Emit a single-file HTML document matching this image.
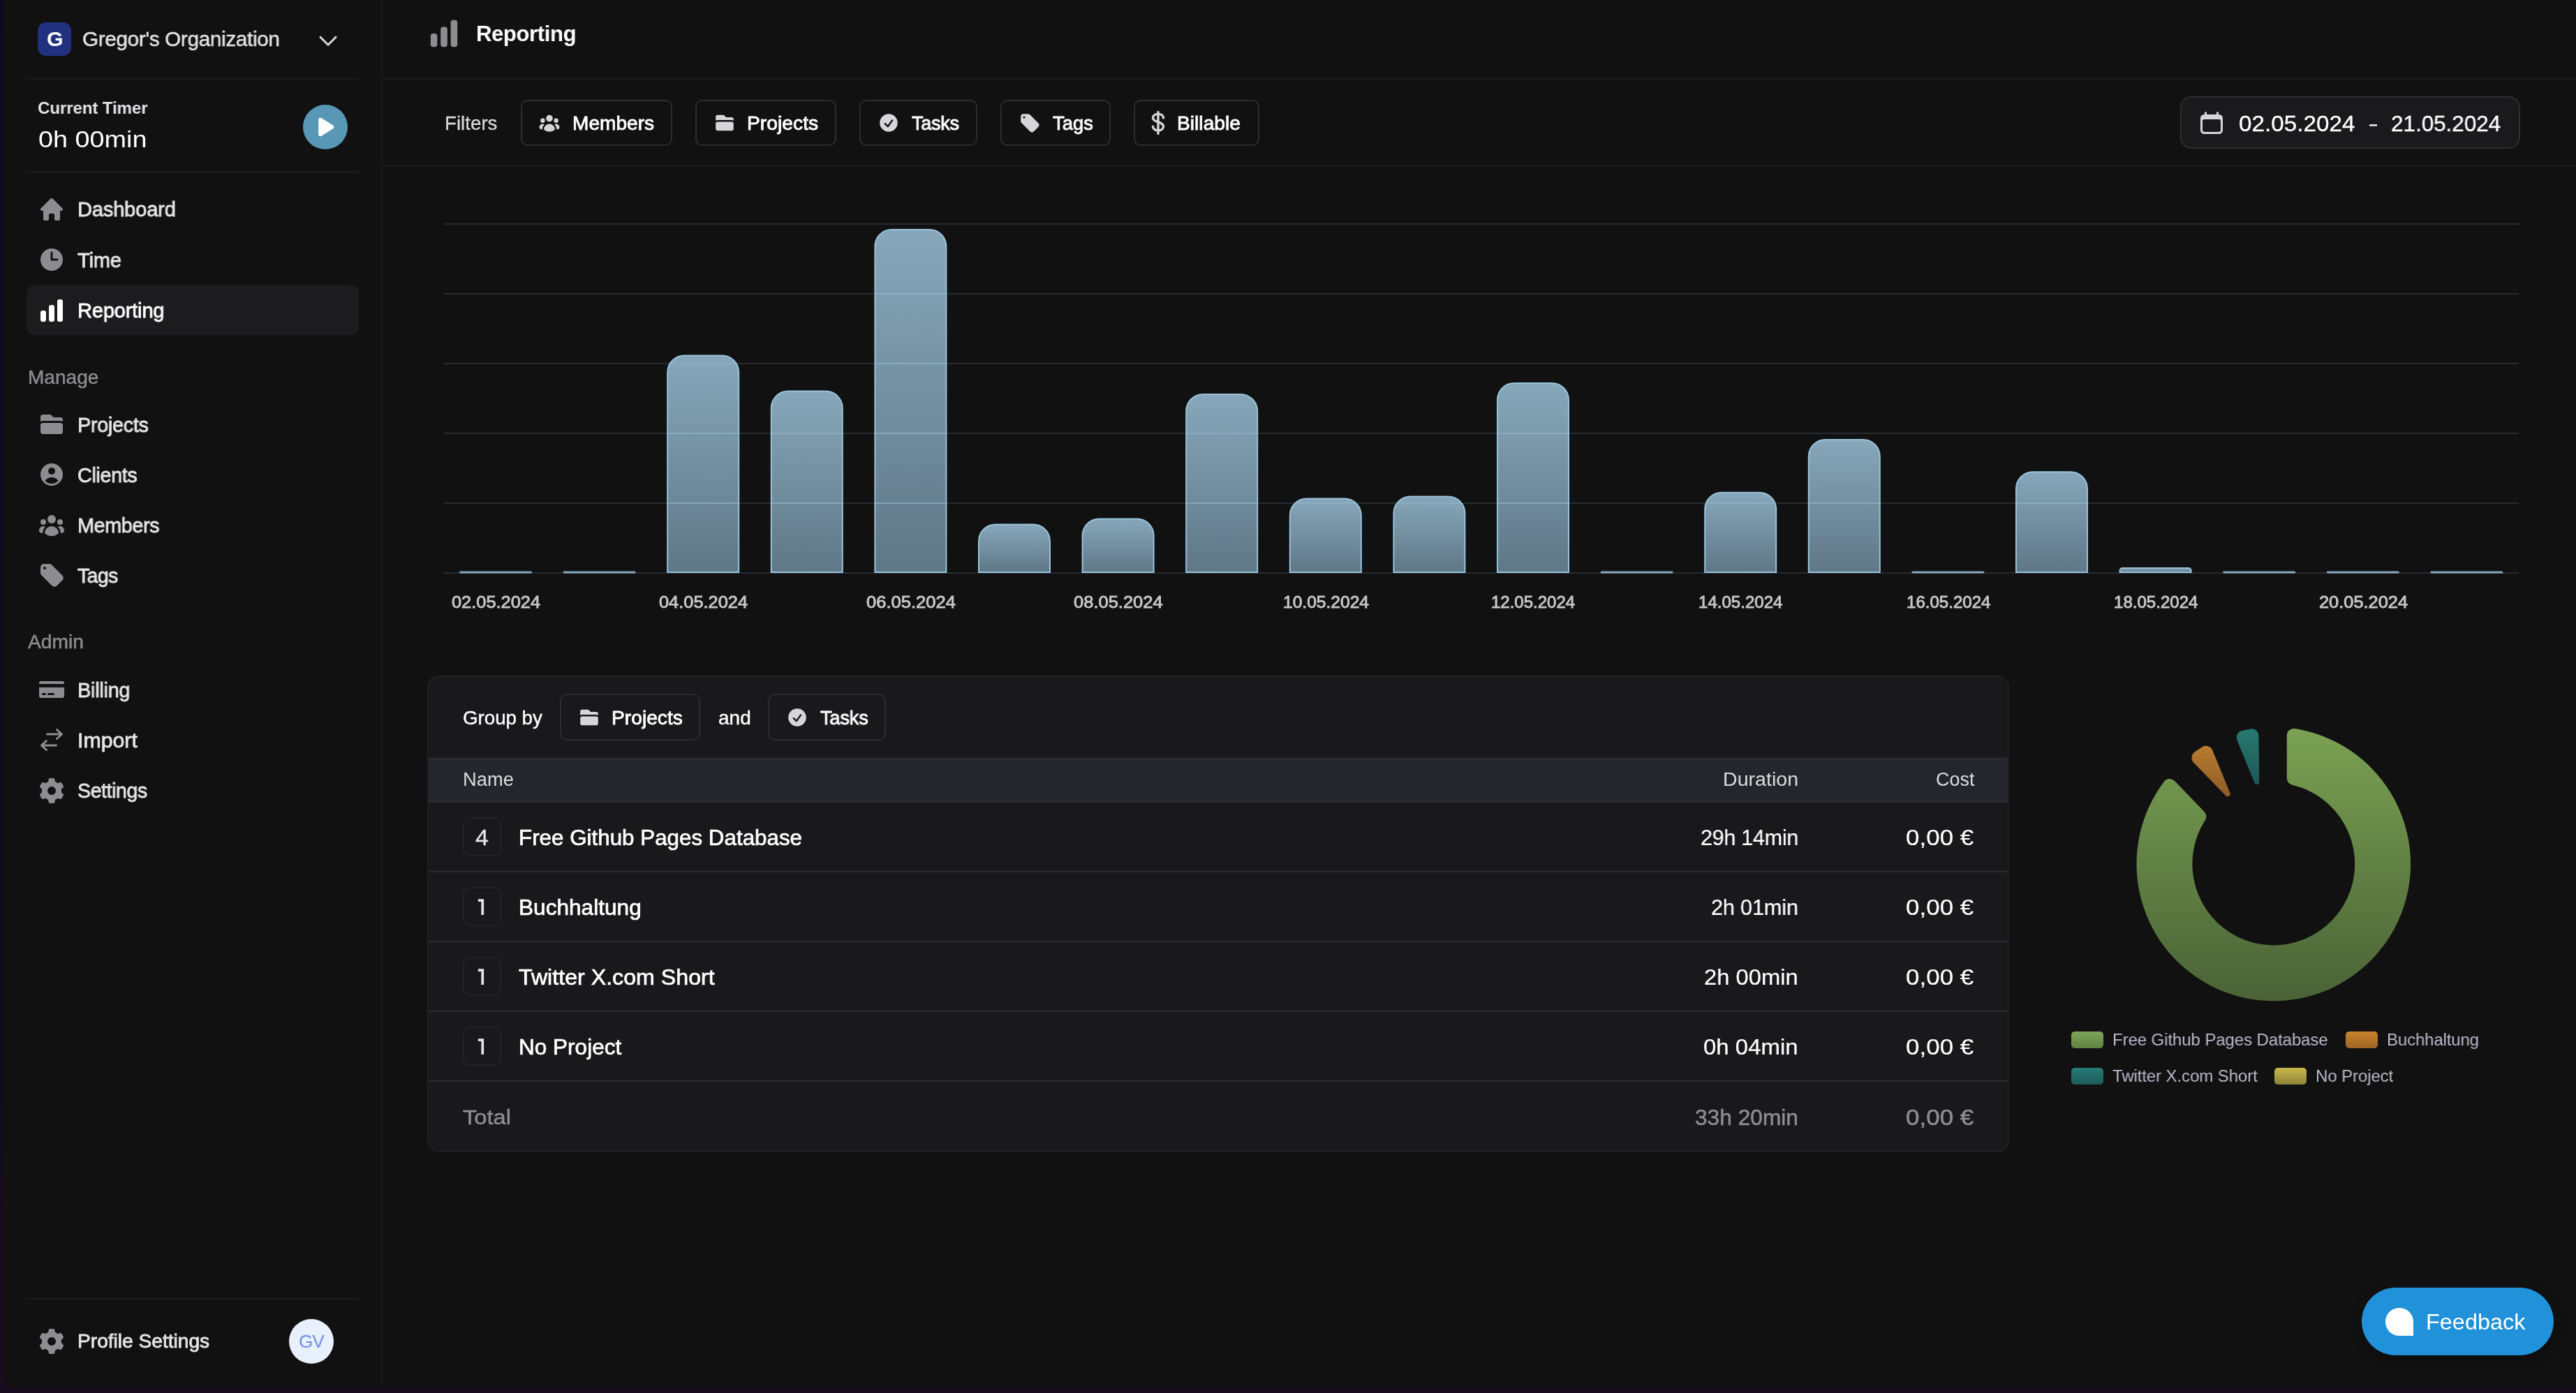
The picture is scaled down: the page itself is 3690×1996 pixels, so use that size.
<!DOCTYPE html><html><head><meta charset="utf-8"><style>
html,body{margin:0;padding:0;width:3690px;height:1996px;overflow:hidden;background:#0e0b1c;}
.t{position:absolute;white-space:nowrap;transform-origin:0 0;will-change:transform;font-family:"Liberation Sans",sans-serif;}
</style></head><body>
<div style="position:absolute;left:0px;top:0px;width:3690px;height:1996px;background:linear-gradient(180deg,#0b0b1f 0%,#100b1f 70%,#180c1e 100%);"></div>
<div style="position:absolute;left:6px;top:0px;width:3684px;height:1990px;background:#111111;border-bottom-left-radius:16px;"></div>
<div style="position:absolute;left:546px;top:0px;width:2px;height:1990px;background:#19191c;"></div>
<div style="position:absolute;left:54px;top:32px;width:48px;height:48px;background:#213180;border-radius:12px;"></div>
<div class="t" style="left:66.5px;top:41.4px;font-size:30.33px;line-height:30.33px;color:#ffffff;letter-spacing:0.000px;font-weight:700;transform:scaleX(0.9874);">G</div>
<div class="t" style="left:118.4px;top:41.4px;font-size:30.33px;line-height:30.33px;color:#e4e4e7;letter-spacing:-0.325px;font-weight:400;transform:scaleX(0.9780);-webkit-text-stroke:0.5px #e4e4e7;">Gregor's Organization</div>
<svg style="position:absolute;left:452px;top:43px" width="36" height="32" viewBox="0 0 36 32"><path d="M7 10.2l11 11 11-11" fill="none" stroke="#d9d9dc" stroke-width="3" stroke-linecap="round" stroke-linejoin="round"/></svg>
<div style="position:absolute;left:38px;top:112px;width:476px;height:2px;background:#1c1c1f;"></div>
<div class="t" style="left:54.2px;top:142.6px;font-size:24.46px;line-height:24.46px;color:#e4e4e7;letter-spacing:-0.154px;font-weight:700;transform:scaleX(0.9885);">Current Timer</div>
<div class="t" style="left:54.5px;top:182.8px;font-size:33.34px;line-height:33.34px;color:#ffffff;letter-spacing:0.000px;font-weight:400;transform:scaleX(1.1338);">0h 00min</div>
<div style="position:absolute;left:434px;top:150px;width:64px;height:64px;background:#5997b6;border-radius:50%;"></div>
<svg style="position:absolute;left:449px;top:164px" width="36" height="36" viewBox="0 0 20 20"><path fill="#ffffff" fill-rule="evenodd" clip-rule="evenodd" d="M6.3 2.841A1.5 1.5 0 0 0 4 4.11V15.89a1.5 1.5 0 0 0 2.3 1.269l9.344-5.89a1.5 1.5 0 0 0 0-2.538L6.3 2.84Z" /></svg>
<div style="position:absolute;left:38px;top:246px;width:476px;height:2px;background:#1c1c1f;"></div>
<div style="position:absolute;left:38px;top:408px;width:476px;height:72px;background:#1c1c1f;border-radius:12px;"></div>
<svg style="position:absolute;left:54px;top:280px" width="40" height="40" viewBox="0 0 20 20"><path fill="#8d8d91" fill-rule="evenodd" clip-rule="evenodd" d="M9.293 2.293a1 1 0 0 1 1.414 0l7 7A1 1 0 0 1 17 11h-1v6a1 1 0 0 1-1 1h-2a1 1 0 0 1-1-1v-3a1 1 0 0 0-1-1H9a1 1 0 0 0-1 1v3a1 1 0 0 1-1 1H5a1 1 0 0 1-1-1v-6H3a1 1 0 0 1-.707-1.707l7-7Z" /></svg>
<div class="t" style="left:110.5px;top:285.4px;font-size:29.38px;line-height:29.38px;color:#e5e5e7;letter-spacing:-0.183px;font-weight:400;transform:scaleX(0.9898);-webkit-text-stroke:0.8px #e5e5e7;">Dashboard</div>
<svg style="position:absolute;left:54px;top:352px" width="40" height="40" viewBox="0 0 20 20"><path fill="#8d8d91" fill-rule="evenodd" clip-rule="evenodd" d="M10 18a8 8 0 1 0 0-16 8 8 0 0 0 0 16Zm.75-13a.75.75 0 0 0-1.5 0v5c0 .414.336.75.75.75h4a.75.75 0 0 0 0-1.5h-3.25V5Z" /></svg>
<div class="t" style="left:110.5px;top:357.9px;font-size:29.38px;line-height:29.38px;color:#e5e5e7;letter-spacing:-0.216px;font-weight:400;transform:scaleX(0.9899);-webkit-text-stroke:0.8px #e5e5e7;">Time</div>
<svg style="position:absolute;left:54px;top:425px" width="40" height="40" viewBox="0 0 20 20"><path fill="#ffffff" fill-rule="evenodd" clip-rule="evenodd" d="M15.5 2A1.5 1.5 0 0 0 14 3.5v13a1.5 1.5 0 0 0 1.5 1.5h1a1.5 1.5 0 0 0 1.5-1.5v-13A1.5 1.5 0 0 0 16.5 2h-1ZM9.5 6A1.5 1.5 0 0 0 8 7.5v9A1.5 1.5 0 0 0 9.5 18h1a1.5 1.5 0 0 0 1.5-1.5v-9A1.5 1.5 0 0 0 10.5 6h-1ZM3.5 10A1.5 1.5 0 0 0 2 11.5v5A1.5 1.5 0 0 0 3.5 18h1A1.5 1.5 0 0 0 6 16.5v-5A1.5 1.5 0 0 0 4.5 10h-1Z" /></svg>
<div class="t" style="left:110.5px;top:430.4px;font-size:29.38px;line-height:29.38px;color:#ffffff;letter-spacing:-0.181px;font-weight:400;transform:scaleX(0.9887);-webkit-text-stroke:0.8px #ffffff;">Reporting</div>
<div class="t" style="left:39.6px;top:526.8px;font-size:28.01px;line-height:28.01px;color:#8c8c8f;letter-spacing:0.000px;font-weight:400;transform:scaleX(1.0018);-webkit-text-stroke:0.5px #8c8c8f;">Manage</div>
<svg style="position:absolute;left:54px;top:588px" width="40" height="40" viewBox="0 0 20 20"><path fill="#8d8d91" fill-rule="evenodd" clip-rule="evenodd" d="M3.75 3A1.75 1.75 0 0 0 2 4.75v3.26a3.235 3.235 0 0 1 1.75-.51h12.5c.644 0 1.245.188 1.75.51V6.75A1.75 1.75 0 0 0 16.25 5h-4.836a.25.25 0 0 1-.177-.073L9.823 3.513A1.75 1.75 0 0 0 8.586 3H3.75ZM3.75 9A1.75 1.75 0 0 0 2 10.75v4.5c0 .966.784 1.75 1.75 1.75h12.5A1.75 1.75 0 0 0 18 15.25v-4.5A1.75 1.75 0 0 0 16.25 9H3.75Z" /></svg>
<div class="t" style="left:110.5px;top:594.1px;font-size:29.38px;line-height:29.38px;color:#e5e5e7;letter-spacing:-0.297px;font-weight:400;transform:scaleX(0.9804);-webkit-text-stroke:0.8px #e5e5e7;">Projects</div>
<svg style="position:absolute;left:54px;top:660px" width="40" height="40" viewBox="0 0 20 20"><path fill="#8d8d91" fill-rule="evenodd" clip-rule="evenodd" d="M18 10a8 8 0 1 1-16 0 8 8 0 0 1 16 0Zm-5.5-2.5a2.5 2.5 0 1 1-5 0 2.5 2.5 0 0 1 5 0ZM10 12a5.99 5.99 0 0 0-4.793 2.39A6.483 6.483 0 0 0 10 16.5a6.483 6.483 0 0 0 4.793-2.11A5.99 5.99 0 0 0 10 12Z" /></svg>
<div class="t" style="left:110.5px;top:665.9px;font-size:29.38px;line-height:29.38px;color:#e5e5e7;letter-spacing:-0.336px;font-weight:400;transform:scaleX(0.9775);-webkit-text-stroke:0.8px #e5e5e7;">Clients</div>
<svg style="position:absolute;left:54px;top:732px" width="40" height="40" viewBox="0 0 20 20"><path fill="#8d8d91" fill-rule="evenodd" clip-rule="evenodd" d="M10 9a3 3 0 1 0 0-6 3 3 0 0 0 0 6ZM6 8a2 2 0 1 1-4 0 2 2 0 0 1 4 0ZM1.49 15.326a.78.78 0 0 1-.358-.442 3 3 0 0 1 4.308-3.516 6.484 6.484 0 0 0-1.905 3.959c-.023.222-.014.442.025.654a4.97 4.97 0 0 1-2.07-.655ZM16.44 15.98a4.97 4.97 0 0 0 2.07-.654.78.78 0 0 0 .357-.442 3 3 0 0 0-4.308-3.517 6.484 6.484 0 0 1 1.907 3.96 2.32 2.32 0 0 1-.026.654ZM18 8a2 2 0 1 1-4 0 2 2 0 0 1 4 0ZM5.304 16.19a.844.844 0 0 1-.277-.71 5 5 0 0 1 9.947 0 .843.843 0 0 1-.277.71A6.975 6.975 0 0 1 10 18a6.974 6.974 0 0 1-4.696-1.81Z" /></svg>
<div class="t" style="left:110.5px;top:737.9px;font-size:29.38px;line-height:29.38px;color:#e5e5e7;letter-spacing:-0.415px;font-weight:400;transform:scaleX(0.9797);-webkit-text-stroke:0.8px #e5e5e7;">Members</div>
<svg style="position:absolute;left:54px;top:804px" width="40" height="40" viewBox="0 0 20 20"><path fill="#8d8d91" fill-rule="evenodd" clip-rule="evenodd" d="M4.5 2A2.5 2.5 0 0 0 2 4.5v3.879a2.5 2.5 0 0 0 .732 1.767l7.5 7.5a2.5 2.5 0 0 0 3.536 0l3.878-3.878a2.5 2.5 0 0 0 0-3.536l-7.5-7.5A2.5 2.5 0 0 0 8.38 2H4.5ZM5 6a1 1 0 1 0 0-2 1 1 0 0 0 0 2Z" /></svg>
<div class="t" style="left:110.5px;top:809.7px;font-size:29.38px;line-height:29.38px;color:#e5e5e7;letter-spacing:-0.652px;font-weight:400;transform:scaleX(0.9685);-webkit-text-stroke:0.8px #e5e5e7;">Tags</div>
<div class="t" style="left:39.6px;top:906.0px;font-size:28.01px;line-height:28.01px;color:#8c8c8f;letter-spacing:0.000px;font-weight:400;transform:scaleX(1.0064);-webkit-text-stroke:0.5px #8c8c8f;">Admin</div>
<svg style="position:absolute;left:54px;top:968px" width="40" height="40" viewBox="0 0 20 20"><path fill="#8d8d91" fill-rule="evenodd" clip-rule="evenodd" d="M2.5 4A1.5 1.5 0 0 0 1 5.5V6h18v-.5A1.5 1.5 0 0 0 17.5 4h-15ZM19 8.5H1v6A1.5 1.5 0 0 0 2.5 16h15a1.5 1.5 0 0 0 1.5-1.5v-6ZM3 13.25a.75.75 0 0 1 .75-.75h1.5a.75.75 0 0 1 0 1.5h-1.5a.75.75 0 0 1-.75-.75Zm4.75-.75a.75.75 0 0 0 0 1.5h3.5a.75.75 0 0 0 0-1.5h-3.5Z" /></svg>
<div class="t" style="left:110.5px;top:973.7px;font-size:29.38px;line-height:29.38px;color:#e5e5e7;letter-spacing:-0.242px;font-weight:400;transform:scaleX(0.9815);-webkit-text-stroke:0.8px #e5e5e7;">Billing</div>
<svg style="position:absolute;left:54px;top:1040px" width="40" height="40" viewBox="0 0 20 20"><path fill="#8d8d91" fill-rule="evenodd" clip-rule="evenodd" d="M13.2 2.24a.75.75 0 0 0 .04 1.06l2.1 1.95H6.75a.75.75 0 0 0 0 1.5h8.59l-2.1 1.95a.75.75 0 1 0 1.02 1.1l3.5-3.25a.75.75 0 0 0 0-1.1l-3.5-3.25a.75.75 0 0 0-1.06.04Zm-6.4 8a.75.75 0 0 0-1.06-.04l-3.5 3.25a.75.75 0 0 0 0 1.1l3.5 3.25a.75.75 0 1 0 1.02-1.1l-2.1-1.95h8.59a.75.75 0 0 0 0-1.5H4.66l2.1-1.95a.75.75 0 0 0 .04-1.06Z" /></svg>
<div class="t" style="left:110.5px;top:1045.5px;font-size:29.38px;line-height:29.38px;color:#e5e5e7;letter-spacing:0.000px;font-weight:400;transform:scaleX(1.0306);-webkit-text-stroke:0.8px #e5e5e7;">Import</div>
<svg style="position:absolute;left:54px;top:1113px" width="40" height="40" viewBox="0 0 20 20"><path fill="#8d8d91" fill-rule="evenodd" clip-rule="evenodd" d="M7.84 1.804A1 1 0 0 1 8.82 1h2.36a1 1 0 0 1 .98.804l.331 1.652a6.993 6.993 0 0 1 1.929 1.115l1.598-.54a1 1 0 0 1 1.186.447l1.18 2.044a1 1 0 0 1-.205 1.251l-1.267 1.113a7.047 7.047 0 0 1 0 2.228l1.267 1.113a1 1 0 0 1 .206 1.25l-1.18 2.045a1 1 0 0 1-1.187.447l-1.598-.54a6.993 6.993 0 0 1-1.929 1.115l-.33 1.652a1 1 0 0 1-.98.804H8.82a1 1 0 0 1-.98-.804l-.331-1.652a6.993 6.993 0 0 1-1.929-1.115l-1.598.54a1 1 0 0 1-1.186-.447l-1.18-2.044a1 1 0 0 1 .205-1.251l1.267-1.114a7.05 7.05 0 0 1 0-2.227L1.821 7.773a1 1 0 0 1-.206-1.25l1.18-2.045a1 1 0 0 1 1.187-.447l1.598.54A6.993 6.993 0 0 1 7.51 3.456l.33-1.652ZM10 13a3 3 0 1 0 0-6 3 3 0 0 0 0 6Z" /></svg>
<div class="t" style="left:110.5px;top:1118.4px;font-size:29.38px;line-height:29.38px;color:#e5e5e7;letter-spacing:-0.431px;font-weight:400;transform:scaleX(0.9716);-webkit-text-stroke:0.8px #e5e5e7;">Settings</div>
<div style="position:absolute;left:38px;top:1860px;width:476px;height:2px;background:#1c1c1f;"></div>
<svg style="position:absolute;left:54px;top:1902px" width="40" height="40" viewBox="0 0 20 20"><path fill="#8d8d91" fill-rule="evenodd" clip-rule="evenodd" d="M7.84 1.804A1 1 0 0 1 8.82 1h2.36a1 1 0 0 1 .98.804l.331 1.652a6.993 6.993 0 0 1 1.929 1.115l1.598-.54a1 1 0 0 1 1.186.447l1.18 2.044a1 1 0 0 1-.205 1.251l-1.267 1.113a7.047 7.047 0 0 1 0 2.228l1.267 1.113a1 1 0 0 1 .206 1.25l-1.18 2.045a1 1 0 0 1-1.187.447l-1.598-.54a6.993 6.993 0 0 1-1.929 1.115l-.33 1.652a1 1 0 0 1-.98.804H8.82a1 1 0 0 1-.98-.804l-.331-1.652a6.993 6.993 0 0 1-1.929-1.115l-1.598.54a1 1 0 0 1-1.186-.447l-1.18-2.044a1 1 0 0 1 .205-1.251l1.267-1.114a7.05 7.05 0 0 1 0-2.227L1.821 7.773a1 1 0 0 1-.206-1.25l1.18-2.045a1 1 0 0 1 1.187-.447l1.598.54A6.993 6.993 0 0 1 7.51 3.456l.33-1.652ZM10 13a3 3 0 1 0 0-6 3 3 0 0 0 0 6Z" /></svg>
<div class="t" style="left:110.9px;top:1908.4px;font-size:28.15px;line-height:28.15px;color:#e5e5e7;letter-spacing:-0.007px;font-weight:400;transform:scaleX(0.9995);-webkit-text-stroke:0.8px #e5e5e7;">Profile Settings</div>
<div style="position:absolute;left:414px;top:1890px;width:64px;height:64px;background:#e8f0fe;border-radius:50%;"></div>
<div class="t" style="left:427.8px;top:1908.9px;font-size:26.64px;line-height:26.64px;color:#6a8de6;letter-spacing:-0.857px;font-weight:400;transform:scaleX(0.9777);">GV</div>
<div style="position:absolute;left:548px;top:112px;width:3142px;height:2px;background:#1c1c1f;"></div>
<svg style="position:absolute;left:612px;top:24px" width="48" height="48" viewBox="0 0 20 20"><path fill="#8d8d91" fill-rule="evenodd" clip-rule="evenodd" d="M15.5 2A1.5 1.5 0 0 0 14 3.5v13a1.5 1.5 0 0 0 1.5 1.5h1a1.5 1.5 0 0 0 1.5-1.5v-13A1.5 1.5 0 0 0 16.5 2h-1ZM9.5 6A1.5 1.5 0 0 0 8 7.5v9A1.5 1.5 0 0 0 9.5 18h1a1.5 1.5 0 0 0 1.5-1.5v-9A1.5 1.5 0 0 0 10.5 6h-1ZM3.5 10A1.5 1.5 0 0 0 2 11.5v5A1.5 1.5 0 0 0 3.5 18h1A1.5 1.5 0 0 0 6 16.5v-5A1.5 1.5 0 0 0 4.5 10h-1Z" /></svg>
<div class="t" style="left:681.8px;top:33.3px;font-size:31.83px;line-height:31.83px;color:#ffffff;letter-spacing:-0.431px;font-weight:700;transform:scaleX(0.9771);">Reporting</div>
<div style="position:absolute;left:548px;top:237px;width:3142px;height:2px;background:#1c1c1f;"></div>
<div class="t" style="left:636.9px;top:162.9px;font-size:27.60px;line-height:27.60px;color:#d9d9dc;letter-spacing:0.000px;font-weight:400;transform:scaleX(1.0049);-webkit-text-stroke:0.3px #d9d9dc;">Filters</div>
<div style="position:absolute;left:746px;top:143px;width:217px;height:66px;box-sizing:border-box;border:2px solid #2c2c31;border-radius:10px;"></div>
<svg style="position:absolute;left:770.5px;top:160px" width="32" height="32" viewBox="0 0 20 20"><path fill="#d6d6d9" fill-rule="evenodd" clip-rule="evenodd" d="M10 9a3 3 0 1 0 0-6 3 3 0 0 0 0 6ZM6 8a2 2 0 1 1-4 0 2 2 0 0 1 4 0ZM1.49 15.326a.78.78 0 0 1-.358-.442 3 3 0 0 1 4.308-3.516 6.484 6.484 0 0 0-1.905 3.959c-.023.222-.014.442.025.654a4.97 4.97 0 0 1-2.07-.655ZM16.44 15.98a4.97 4.97 0 0 0 2.07-.654.78.78 0 0 0 .357-.442 3 3 0 0 0-4.308-3.517 6.484 6.484 0 0 1 1.907 3.96 2.32 2.32 0 0 1-.026.654ZM18 8a2 2 0 1 1-4 0 2 2 0 0 1 4 0ZM5.304 16.19a.844.844 0 0 1-.277-.71 5 5 0 0 1 9.947 0 .843.843 0 0 1-.277.71A6.975 6.975 0 0 1 10 18a6.974 6.974 0 0 1-4.696-1.81Z" /></svg>
<div class="t" style="left:820.4px;top:162.9px;font-size:27.60px;line-height:27.60px;color:#ffffff;letter-spacing:0.000px;font-weight:400;transform:scaleX(1.0181);-webkit-text-stroke:0.8px #ffffff;">Members</div>
<div style="position:absolute;left:996px;top:143px;width:202px;height:66px;box-sizing:border-box;border:2px solid #2c2c31;border-radius:10px;"></div>
<svg style="position:absolute;left:1022.2px;top:159.5px" width="32" height="32" viewBox="0 0 20 20"><path fill="#d6d6d9" fill-rule="evenodd" clip-rule="evenodd" d="M3.75 3A1.75 1.75 0 0 0 2 4.75v3.26a3.235 3.235 0 0 1 1.75-.51h12.5c.644 0 1.245.188 1.75.51V6.75A1.75 1.75 0 0 0 16.25 5h-4.836a.25.25 0 0 1-.177-.073L9.823 3.513A1.75 1.75 0 0 0 8.586 3H3.75ZM3.75 9A1.75 1.75 0 0 0 2 10.75v4.5c0 .966.784 1.75 1.75 1.75h12.5A1.75 1.75 0 0 0 18 15.25v-4.5A1.75 1.75 0 0 0 16.25 9H3.75Z" /></svg>
<div class="t" style="left:1070.4px;top:162.9px;font-size:27.60px;line-height:27.60px;color:#ffffff;letter-spacing:0.000px;font-weight:400;transform:scaleX(1.0251);-webkit-text-stroke:0.8px #ffffff;">Projects</div>
<div style="position:absolute;left:1231px;top:143px;width:169px;height:66px;box-sizing:border-box;border:2px solid #2c2c31;border-radius:10px;"></div>
<svg style="position:absolute;left:1257px;top:159.8px" width="32" height="32" viewBox="0 0 20 20"><path fill="#d6d6d9" fill-rule="evenodd" clip-rule="evenodd" d="M10 18a8 8 0 1 0 0-16 8 8 0 0 0 0 16Zm3.857-9.809a.75.75 0 0 0-1.214-.882l-3.483 4.79-1.88-1.88a.75.75 0 1 0-1.06 1.061l2.5 2.5a.75.75 0 0 0 1.137-.089l4-5.5Z" /></svg>
<div class="t" style="left:1306.0px;top:162.9px;font-size:27.60px;line-height:27.60px;color:#ffffff;letter-spacing:-0.321px;font-weight:400;transform:scaleX(0.9818);-webkit-text-stroke:0.8px #ffffff;">Tasks</div>
<div style="position:absolute;left:1433px;top:143px;width:158px;height:66px;box-sizing:border-box;border:2px solid #2c2c31;border-radius:10px;"></div>
<svg style="position:absolute;left:1458.5px;top:159.8px" width="32" height="32" viewBox="0 0 20 20"><path fill="#d6d6d9" fill-rule="evenodd" clip-rule="evenodd" d="M4.5 2A2.5 2.5 0 0 0 2 4.5v3.879a2.5 2.5 0 0 0 .732 1.767l7.5 7.5a2.5 2.5 0 0 0 3.536 0l3.878-3.878a2.5 2.5 0 0 0 0-3.536l-7.5-7.5A2.5 2.5 0 0 0 8.38 2H4.5ZM5 6a1 1 0 1 0 0-2 1 1 0 0 0 0 2Z" /></svg>
<div class="t" style="left:1507.6px;top:162.9px;font-size:27.60px;line-height:27.60px;color:#ffffff;letter-spacing:-0.066px;font-weight:400;transform:scaleX(0.9966);-webkit-text-stroke:0.8px #ffffff;">Tags</div>
<div style="position:absolute;left:1624px;top:143px;width:180px;height:66px;box-sizing:border-box;border:2px solid #2c2c31;border-radius:10px;"></div>
<svg style="position:absolute;left:1646px;top:158px" width="26" height="36" viewBox="0 0 26 36"><path d="M13 2.5v31M20.5 11c0-3.3-3.3-5.6-7.5-5.6S5.5 7.7 5.5 11s3.4 4.6 7.5 5.9 7.5 2.9 7.5 6.3-3.3 5.7-7.5 5.7-7.5-2.4-7.5-5.7" fill="none" stroke="#d6d6d9" stroke-width="3.4" stroke-linecap="round"/></svg>
<div class="t" style="left:1685.6px;top:162.9px;font-size:27.60px;line-height:27.60px;color:#ffffff;letter-spacing:0.000px;font-weight:400;transform:scaleX(1.0226);-webkit-text-stroke:0.8px #ffffff;">Billable</div>
<div style="position:absolute;left:3123px;top:138px;width:487px;height:75px;box-sizing:border-box;background:#1a1a1d;border:2px solid #2e2e33;border-radius:16px;"></div>
<svg style="position:absolute;left:3148.4px;top:156px" width="40" height="40" viewBox="0 0 20 20"><path fill="#d6d6d9" fill-rule="evenodd" clip-rule="evenodd" d="M5.75 2a.75.75 0 0 1 .75.75V4h7V2.75a.75.75 0 0 1 1.5 0V4h.25A2.75 2.75 0 0 1 18 6.75v8.5A2.75 2.75 0 0 1 15.25 18H4.75A2.75 2.75 0 0 1 2 15.25v-8.5A2.75 2.75 0 0 1 4.75 4H5V2.75A.75.75 0 0 1 5.75 2Zm-1 5.5c-.69 0-1.25.56-1.25 1.25v6.5c0 .69.56 1.25 1.25 1.25h10.5c.69 0 1.25-.56 1.25-1.25v-6.5c0-.69-.56-1.25-1.25-1.25H4.75Z" /></svg>
<div class="t" style="left:3206.5px;top:161.5px;font-size:31.83px;line-height:31.83px;color:#ffffff;letter-spacing:0.000px;font-weight:400;transform:scaleX(1.0450);-webkit-text-stroke:0.3px #ffffff;">02.05.2024</div>
<div style="position:absolute;left:3394px;top:178px;width:11px;height:3px;background:#d0d0d3;"></div>
<div class="t" style="left:3425.4px;top:161.5px;font-size:31.83px;line-height:31.83px;color:#ffffff;letter-spacing:-0.113px;font-weight:400;transform:scaleX(0.9936);-webkit-text-stroke:0.3px #ffffff;">21.05.2024</div>
<svg style="position:absolute;left:0;top:0" width="3690" height="1000" viewBox="0 0 3690 1000"><defs><linearGradient id="bg" x1="0" y1="0" x2="0" y2="1"><stop offset="0" stop-color="#87a7ba"/><stop offset="1" stop-color="#5f7787"/></linearGradient></defs><rect x="636" y="320" width="2972" height="2" fill="#252b33"/><rect x="636" y="420" width="2972" height="2" fill="#252b33"/><rect x="636" y="520" width="2972" height="2" fill="#252b33"/><rect x="636" y="620" width="2972" height="2" fill="#252b33"/><rect x="636" y="720" width="2972" height="2" fill="#252b33"/><rect x="636" y="820" width="2972" height="2" fill="#252b33"/><rect x="658.0" y="818.5" width="104" height="3" rx="1.5" fill="#86a6b8"/><rect x="806.6" y="818.5" width="104" height="3" rx="1.5" fill="#86a6b8"/><path d="M956.2 820V533.4A24 24 0 0 1 980.2 509.4H1034.2A24 24 0 0 1 1058.2 533.4V820Z" fill="url(#bg)" stroke="#98c3da" stroke-width="2"/><rect x="960.7" y="520" width="93.1" height="2" fill="#8fb0c3" fill-opacity="0.75"/><rect x="957.2" y="620" width="100.0" height="2" fill="#8fb0c3" fill-opacity="0.75"/><rect x="957.2" y="720" width="100.0" height="2" fill="#8fb0c3" fill-opacity="0.75"/><path d="M1104.8 820V584.6A24 24 0 0 1 1128.8 560.6H1182.8A24 24 0 0 1 1206.8 584.6V820Z" fill="url(#bg)" stroke="#98c3da" stroke-width="2"/><rect x="1105.8" y="620" width="100.0" height="2" fill="#8fb0c3" fill-opacity="0.75"/><rect x="1105.8" y="720" width="100.0" height="2" fill="#8fb0c3" fill-opacity="0.75"/><path d="M1253.4 820V353.0A24 24 0 0 1 1277.4 329.0H1331.4A24 24 0 0 1 1355.4 353.0V820Z" fill="url(#bg)" stroke="#98c3da" stroke-width="2"/><rect x="1254.4" y="420" width="100.0" height="2" fill="#8fb0c3" fill-opacity="0.75"/><rect x="1254.4" y="520" width="100.0" height="2" fill="#8fb0c3" fill-opacity="0.75"/><rect x="1254.4" y="620" width="100.0" height="2" fill="#8fb0c3" fill-opacity="0.75"/><rect x="1254.4" y="720" width="100.0" height="2" fill="#8fb0c3" fill-opacity="0.75"/><path d="M1402.0 820V775.4A24 24 0 0 1 1426.0 751.4H1480.0A24 24 0 0 1 1504.0 775.4V820Z" fill="url(#bg)" stroke="#98c3da" stroke-width="2"/><path d="M1550.6 820V767.4A24 24 0 0 1 1574.6 743.4H1628.6A24 24 0 0 1 1652.6 767.4V820Z" fill="url(#bg)" stroke="#98c3da" stroke-width="2"/><path d="M1699.2 820V589.0A24 24 0 0 1 1723.2 565.0H1777.2A24 24 0 0 1 1801.2 589.0V820Z" fill="url(#bg)" stroke="#98c3da" stroke-width="2"/><rect x="1700.2" y="620" width="100.0" height="2" fill="#8fb0c3" fill-opacity="0.75"/><rect x="1700.2" y="720" width="100.0" height="2" fill="#8fb0c3" fill-opacity="0.75"/><path d="M1847.8 820V738.5A24 24 0 0 1 1871.8 714.5H1925.8A24 24 0 0 1 1949.8 738.5V820Z" fill="url(#bg)" stroke="#98c3da" stroke-width="2"/><rect x="1856.4" y="720" width="84.8" height="2" fill="#8fb0c3" fill-opacity="0.75"/><path d="M1996.4 820V735.4A24 24 0 0 1 2020.4 711.4H2074.4A24 24 0 0 1 2098.4 735.4V820Z" fill="url(#bg)" stroke="#98c3da" stroke-width="2"/><rect x="2002.2" y="720" width="90.4" height="2" fill="#8fb0c3" fill-opacity="0.75"/><path d="M2145.0 820V573.0A24 24 0 0 1 2169.0 549.0H2223.0A24 24 0 0 1 2247.0 573.0V820Z" fill="url(#bg)" stroke="#98c3da" stroke-width="2"/><rect x="2146.0" y="620" width="100.0" height="2" fill="#8fb0c3" fill-opacity="0.75"/><rect x="2146.0" y="720" width="100.0" height="2" fill="#8fb0c3" fill-opacity="0.75"/><rect x="2292.6" y="818.5" width="104" height="3" rx="1.5" fill="#86a6b8"/><path d="M2442.2 820V729.7A24 24 0 0 1 2466.2 705.7H2520.2A24 24 0 0 1 2544.2 729.7V820Z" fill="url(#bg)" stroke="#98c3da" stroke-width="2"/><rect x="2444.8" y="720" width="96.7" height="2" fill="#8fb0c3" fill-opacity="0.75"/><path d="M2590.8 820V654.0A24 24 0 0 1 2614.8 630.0H2668.8A24 24 0 0 1 2692.8 654.0V820Z" fill="url(#bg)" stroke="#98c3da" stroke-width="2"/><rect x="2591.8" y="720" width="100.0" height="2" fill="#8fb0c3" fill-opacity="0.75"/><rect x="2738.4" y="818.5" width="104" height="3" rx="1.5" fill="#86a6b8"/><path d="M2888.0 820V700.2A24 24 0 0 1 2912.0 676.2H2966.0A24 24 0 0 1 2990.0 700.2V820Z" fill="url(#bg)" stroke="#98c3da" stroke-width="2"/><rect x="2889.0" y="720" width="100.0" height="2" fill="#8fb0c3" fill-opacity="0.75"/><path d="M3036.6 820V817.5A3.5 3.5 0 0 1 3040.1 814.0H3135.1A3.5 3.5 0 0 1 3138.6 817.5V820Z" fill="url(#bg)" stroke="#98c3da" stroke-width="2"/><rect x="3184.2" y="818.5" width="104" height="3" rx="1.5" fill="#86a6b8"/><rect x="3332.8" y="818.5" width="104" height="3" rx="1.5" fill="#86a6b8"/><rect x="3481.4" y="818.5" width="104" height="3" rx="1.5" fill="#86a6b8"/></svg>
<div class="t" style="left:646.8px;top:850.8px;font-size:24.05px;line-height:24.05px;color:#c6c6c6;letter-spacing:0.000px;font-weight:400;transform:scaleX(1.0552);-webkit-text-stroke:0.9px #c6c6c6;">02.05.2024</div>
<div class="t" style="left:944.0px;top:850.8px;font-size:24.05px;line-height:24.05px;color:#c6c6c6;letter-spacing:0.000px;font-weight:400;transform:scaleX(1.0552);-webkit-text-stroke:0.9px #c6c6c6;">04.05.2024</div>
<div class="t" style="left:1240.7px;top:850.8px;font-size:24.05px;line-height:24.05px;color:#c6c6c6;letter-spacing:0.000px;font-weight:400;transform:scaleX(1.0635);-webkit-text-stroke:0.9px #c6c6c6;">06.05.2024</div>
<div class="t" style="left:1538.0px;top:850.8px;font-size:24.05px;line-height:24.05px;color:#c6c6c6;letter-spacing:0.000px;font-weight:400;transform:scaleX(1.0610);-webkit-text-stroke:0.9px #c6c6c6;">08.05.2024</div>
<div class="t" style="left:1837.6px;top:850.8px;font-size:24.05px;line-height:24.05px;color:#c6c6c6;letter-spacing:0.000px;font-weight:400;transform:scaleX(1.0220);-webkit-text-stroke:0.9px #c6c6c6;">10.05.2024</div>
<div class="t" style="left:2136.3px;top:850.8px;font-size:24.05px;line-height:24.05px;color:#c6c6c6;letter-spacing:-0.020px;font-weight:400;transform:scaleX(0.9985);-webkit-text-stroke:0.9px #c6c6c6;">12.05.2024</div>
<div class="t" style="left:2433.2px;top:850.8px;font-size:24.05px;line-height:24.05px;color:#c6c6c6;letter-spacing:0.000px;font-weight:400;transform:scaleX(1.0012);-webkit-text-stroke:0.9px #c6c6c6;">14.05.2024</div>
<div class="t" style="left:2730.5px;top:850.8px;font-size:24.05px;line-height:24.05px;color:#c6c6c6;letter-spacing:0.000px;font-weight:400;transform:scaleX(1.0012);-webkit-text-stroke:0.9px #c6c6c6;">16.05.2024</div>
<div class="t" style="left:3027.7px;top:850.8px;font-size:24.05px;line-height:24.05px;color:#c6c6c6;letter-spacing:0.000px;font-weight:400;transform:scaleX(1.0012);-webkit-text-stroke:0.9px #c6c6c6;">18.05.2024</div>
<div class="t" style="left:3321.6px;top:850.8px;font-size:24.05px;line-height:24.05px;color:#c6c6c6;letter-spacing:0.000px;font-weight:400;transform:scaleX(1.0552);-webkit-text-stroke:0.9px #c6c6c6;">20.05.2024</div>
<div style="position:absolute;left:612px;top:968px;width:2266px;height:683px;box-sizing:border-box;background:#19191c;border:2px solid #202024;border-radius:16px;"></div>
<div class="t" style="left:663.0px;top:1014.8px;font-size:27.74px;line-height:27.74px;color:#ffffff;letter-spacing:-0.035px;font-weight:400;transform:scaleX(0.9979);-webkit-text-stroke:0.4px #ffffff;">Group by</div>
<div style="position:absolute;left:802px;top:994px;width:201px;height:67px;box-sizing:border-box;border:2px solid #2c2c31;border-radius:10px;"></div>
<svg style="position:absolute;left:828px;top:1011.5px" width="32" height="32" viewBox="0 0 20 20"><path fill="#d6d6d9" fill-rule="evenodd" clip-rule="evenodd" d="M3.75 3A1.75 1.75 0 0 0 2 4.75v3.26a3.235 3.235 0 0 1 1.75-.51h12.5c.644 0 1.245.188 1.75.51V6.75A1.75 1.75 0 0 0 16.25 5h-4.836a.25.25 0 0 1-.177-.073L9.823 3.513A1.75 1.75 0 0 0 8.586 3H3.75ZM3.75 9A1.75 1.75 0 0 0 2 10.75v4.5c0 .966.784 1.75 1.75 1.75h12.5A1.75 1.75 0 0 0 18 15.25v-4.5A1.75 1.75 0 0 0 16.25 9H3.75Z" /></svg>
<div class="t" style="left:875.8px;top:1014.8px;font-size:27.74px;line-height:27.74px;color:#ffffff;letter-spacing:0.000px;font-weight:400;transform:scaleX(1.0170);-webkit-text-stroke:0.8px #ffffff;">Projects</div>
<div class="t" style="left:1028.8px;top:1014.8px;font-size:27.74px;line-height:27.74px;color:#ffffff;letter-spacing:0.000px;font-weight:400;transform:scaleX(1.0091);-webkit-text-stroke:0.4px #ffffff;">and</div>
<div style="position:absolute;left:1100px;top:994px;width:169px;height:67px;box-sizing:border-box;border:2px solid #2c2c31;border-radius:10px;"></div>
<svg style="position:absolute;left:1125.5px;top:1011.5px" width="32" height="32" viewBox="0 0 20 20"><path fill="#d6d6d9" fill-rule="evenodd" clip-rule="evenodd" d="M10 18a8 8 0 1 0 0-16 8 8 0 0 0 0 16Zm3.857-9.809a.75.75 0 0 0-1.214-.882l-3.483 4.79-1.88-1.88a.75.75 0 1 0-1.06 1.061l2.5 2.5a.75.75 0 0 0 1.137-.089l4-5.5Z" /></svg>
<div class="t" style="left:1174.7px;top:1014.8px;font-size:27.74px;line-height:27.74px;color:#ffffff;letter-spacing:-0.264px;font-weight:400;transform:scaleX(0.9851);-webkit-text-stroke:0.8px #ffffff;">Tasks</div>
<div style="position:absolute;left:614px;top:1086px;width:2262px;height:64px;background:#25262b;border-top:2px solid #2d2e34;border-bottom:2px solid #2d2e34;box-sizing:border-box;"></div>
<div class="t" style="left:663.0px;top:1103.9px;font-size:26.78px;line-height:26.78px;color:#dcdcdf;letter-spacing:0.000px;font-weight:400;transform:scaleX(1.0205);">Name</div>
<div class="t" style="left:2467.8px;top:1103.9px;font-size:26.78px;line-height:26.78px;color:#dcdcdf;letter-spacing:0.000px;font-weight:400;transform:scaleX(1.0679);">Duration</div>
<div class="t" style="left:2772.6px;top:1103.9px;font-size:26.78px;line-height:26.78px;color:#dcdcdf;letter-spacing:0.000px;font-weight:400;transform:scaleX(1.0061);">Cost</div>
<div style="position:absolute;left:662.5px;top:1171px;width:55.0px;height:55.5px;box-sizing:border-box;border:2px solid #232327;border-radius:10px;"></div>
<div class="t" style="left:681.0px;top:1185.0px;font-size:31.15px;line-height:31.15px;color:#e4e4e7;letter-spacing:0.000px;font-weight:400;transform:scaleX(1.0967);-webkit-text-stroke:0.3px #e4e4e7;">4</div>
<div class="t" style="left:742.7px;top:1185.0px;font-size:31.15px;line-height:31.15px;color:#ffffff;letter-spacing:0.000px;font-weight:400;transform:scaleX(1.0067);-webkit-text-stroke:0.7px #ffffff;">Free Github Pages Database</div>
<div class="t" style="left:2435.6px;top:1185.0px;font-size:31.15px;line-height:31.15px;color:#ffffff;letter-spacing:-0.320px;font-weight:400;transform:scaleX(0.9824);-webkit-text-stroke:0.2px #ffffff;">29h 14min</div>
<div class="t" style="left:2729.6px;top:1185.0px;font-size:31.15px;line-height:31.15px;color:#ffffff;letter-spacing:0.000px;font-weight:400;transform:scaleX(1.1234);-webkit-text-stroke:0.2px #ffffff;">0,00 €</div>
<div style="position:absolute;left:614px;top:1248px;width:2262px;height:2px;background:#2a2b30;"></div>
<div style="position:absolute;left:662.5px;top:1271px;width:55.0px;height:55.5px;box-sizing:border-box;border:2px solid #232327;border-radius:10px;"></div>
<svg style="position:absolute;left:684px;top:1288.0px" width="10" height="24" viewBox="0 0 10 24"><path d="M0.9 0.2H9.1V22.9H5.4V4H0.9Z" fill="#e4e4e7"/></svg>
<div class="t" style="left:742.7px;top:1285.0px;font-size:31.15px;line-height:31.15px;color:#ffffff;letter-spacing:0.000px;font-weight:400;transform:scaleX(1.0150);-webkit-text-stroke:0.7px #ffffff;">Buchhaltung</div>
<div class="t" style="left:2451.0px;top:1285.0px;font-size:31.15px;line-height:31.15px;color:#ffffff;letter-spacing:-0.227px;font-weight:400;transform:scaleX(0.9876);-webkit-text-stroke:0.2px #ffffff;">2h 01min</div>
<div class="t" style="left:2729.6px;top:1285.0px;font-size:31.15px;line-height:31.15px;color:#ffffff;letter-spacing:0.000px;font-weight:400;transform:scaleX(1.1234);-webkit-text-stroke:0.2px #ffffff;">0,00 €</div>
<div style="position:absolute;left:614px;top:1348px;width:2262px;height:2px;background:#2a2b30;"></div>
<div style="position:absolute;left:662.5px;top:1371px;width:55.0px;height:55.5px;box-sizing:border-box;border:2px solid #232327;border-radius:10px;"></div>
<svg style="position:absolute;left:684px;top:1388.0px" width="10" height="24" viewBox="0 0 10 24"><path d="M0.9 0.2H9.1V22.9H5.4V4H0.9Z" fill="#e4e4e7"/></svg>
<div class="t" style="left:742.7px;top:1385.0px;font-size:31.15px;line-height:31.15px;color:#ffffff;letter-spacing:0.000px;font-weight:400;transform:scaleX(1.0332);-webkit-text-stroke:0.7px #ffffff;">Twitter X.com Short</div>
<div class="t" style="left:2441.3px;top:1385.0px;font-size:31.15px;line-height:31.15px;color:#ffffff;letter-spacing:0.000px;font-weight:400;transform:scaleX(1.0511);-webkit-text-stroke:0.2px #ffffff;">2h 00min</div>
<div class="t" style="left:2729.6px;top:1385.0px;font-size:31.15px;line-height:31.15px;color:#ffffff;letter-spacing:0.000px;font-weight:400;transform:scaleX(1.1234);-webkit-text-stroke:0.2px #ffffff;">0,00 €</div>
<div style="position:absolute;left:614px;top:1448px;width:2262px;height:2px;background:#2a2b30;"></div>
<div style="position:absolute;left:662.5px;top:1471px;width:55.0px;height:55.5px;box-sizing:border-box;border:2px solid #232327;border-radius:10px;"></div>
<svg style="position:absolute;left:684px;top:1488.0px" width="10" height="24" viewBox="0 0 10 24"><path d="M0.9 0.2H9.1V22.9H5.4V4H0.9Z" fill="#e4e4e7"/></svg>
<div class="t" style="left:742.7px;top:1485.0px;font-size:31.15px;line-height:31.15px;color:#ffffff;letter-spacing:0.000px;font-weight:400;transform:scaleX(1.0128);-webkit-text-stroke:0.7px #ffffff;">No Project</div>
<div class="t" style="left:2440.3px;top:1485.0px;font-size:31.15px;line-height:31.15px;color:#ffffff;letter-spacing:0.000px;font-weight:400;transform:scaleX(1.0589);-webkit-text-stroke:0.2px #ffffff;">0h 04min</div>
<div class="t" style="left:2729.6px;top:1485.0px;font-size:31.15px;line-height:31.15px;color:#ffffff;letter-spacing:0.000px;font-weight:400;transform:scaleX(1.1234);-webkit-text-stroke:0.2px #ffffff;">0,00 €</div>
<div style="position:absolute;left:614px;top:1548px;width:2262px;height:2px;background:#2a2b30;"></div>
<div class="t" style="left:663.0px;top:1586.1px;font-size:30.33px;line-height:30.33px;color:#8e8e91;letter-spacing:0.000px;font-weight:400;transform:scaleX(1.0769);-webkit-text-stroke:0.5px #8e8e91;">Total</div>
<div class="t" style="left:2428.0px;top:1585.6px;font-size:31.15px;line-height:31.15px;color:#8e8e91;letter-spacing:0.000px;font-weight:400;transform:scaleX(1.0173);-webkit-text-stroke:0.5px #8e8e91;">33h 20min</div>
<div class="t" style="left:2729.6px;top:1585.6px;font-size:31.15px;line-height:31.15px;color:#8e8e91;letter-spacing:0.000px;font-weight:400;transform:scaleX(1.1234);-webkit-text-stroke:0.5px #8e8e91;">0,00 €</div>
<svg style="position:absolute;left:0;top:0" width="3690" height="1996" viewBox="0 0 3690 1996"><defs><linearGradient id="dg0" x1="0" y1="0" x2="0" y2="1"><stop offset="0" stop-color="#7aa153"/><stop offset="1" stop-color="#4a6236"/></linearGradient><linearGradient id="dg1" x1="0" y1="0" x2="0" y2="1"><stop offset="0" stop-color="#b97b30"/><stop offset="1" stop-color="#8c5d26"/></linearGradient><linearGradient id="dg2" x1="0" y1="0" x2="0" y2="1"><stop offset="0" stop-color="#27786f"/><stop offset="1" stop-color="#1f5756"/></linearGradient></defs><path d="M3275.80 1053.97A10 10 0 0 1 3287.36 1044.09A196.3 196.3 0 1 1 3099.87 1120.07A10 10 0 0 1 3115.05 1119.12L3157.51 1162.91A10.00 10.00 0 0 1 3158.76 1175.26A116.4 116.4 0 1 0 3283.51 1124.70A10.00 10.00 0 0 1 3275.80 1114.97Z" fill="url(#dg0)"/><path d="M3142.33 1092.66A10 10 0 0 1 3143.75 1077.52A196.3 196.3 0 0 1 3154.86 1070.24A10 10 0 0 1 3169.30 1074.99L3194.45 1136.20A3.60 3.60 0 0 1 3193.09 1140.58A116.4 116.4 0 0 0 3192.95 1140.67A3.60 3.60 0 0 1 3188.40 1140.17Z" fill="url(#dg1)"/><path d="M3204.46 1060.55A10 10 0 0 1 3211.39 1047.02A196.3 196.3 0 0 1 3223.81 1044.49A10 10 0 0 1 3235.49 1054.22L3236.32 1120.56A3.40 3.40 0 0 1 3233.60 1123.94A116.4 116.4 0 0 0 3233.49 1123.96A3.40 3.40 0 0 1 3229.66 1121.92Z" fill="url(#dg2)"/></svg>
<div style="position:absolute;left:2967px;top:1477.5px;width:46px;height:24.0px;background:linear-gradient(#7ea557,#5f8144);border-radius:5px;"></div>
<div class="t" style="left:3026.0px;top:1477.9px;font-size:24.32px;line-height:24.32px;color:#bcb8cb;letter-spacing:-0.125px;font-weight:400;transform:scaleX(0.9901);">Free Github Pages Database</div>
<div style="position:absolute;left:3360px;top:1477.5px;width:46px;height:24.0px;background:linear-gradient(#c8842e,#a06526);border-radius:5px;"></div>
<div class="t" style="left:3418.5px;top:1477.9px;font-size:24.32px;line-height:24.32px;color:#bcb8cb;letter-spacing:-0.157px;font-weight:400;transform:scaleX(0.9884);">Buchhaltung</div>
<div style="position:absolute;left:2967px;top:1529.5px;width:46px;height:24.0px;background:linear-gradient(#257c76,#1e5c5a);border-radius:5px;"></div>
<div class="t" style="left:3026.0px;top:1529.9px;font-size:24.32px;line-height:24.32px;color:#bcb8cb;letter-spacing:-0.122px;font-weight:400;transform:scaleX(0.9896);">Twitter X.com Short</div>
<div style="position:absolute;left:3258.3px;top:1529.5px;width:46.0px;height:24.0px;background:linear-gradient(#c9b84c,#8d8537);border-radius:5px;"></div>
<div class="t" style="left:3317.0px;top:1529.9px;font-size:24.32px;line-height:24.32px;color:#bcb8cb;letter-spacing:-0.125px;font-weight:400;transform:scaleX(0.9901);">No Project</div>
<div style="position:absolute;left:3383px;top:1845px;width:275px;height:97px;background:#2191d9;border-radius:48.5px;box-shadow:0 4px 14px rgba(0,0,0,0.35);"></div>
<div style="position:absolute;left:3417px;top:1874px;width:40px;height:40px;background:#ffffff;border-radius:20px 20px 0 20px;"></div>
<div class="t" style="left:3475.0px;top:1879.4px;font-size:31.42px;line-height:31.42px;color:#ffffff;letter-spacing:0.000px;font-weight:400;transform:scaleX(1.0326);">Feedback</div>
</body></html>
